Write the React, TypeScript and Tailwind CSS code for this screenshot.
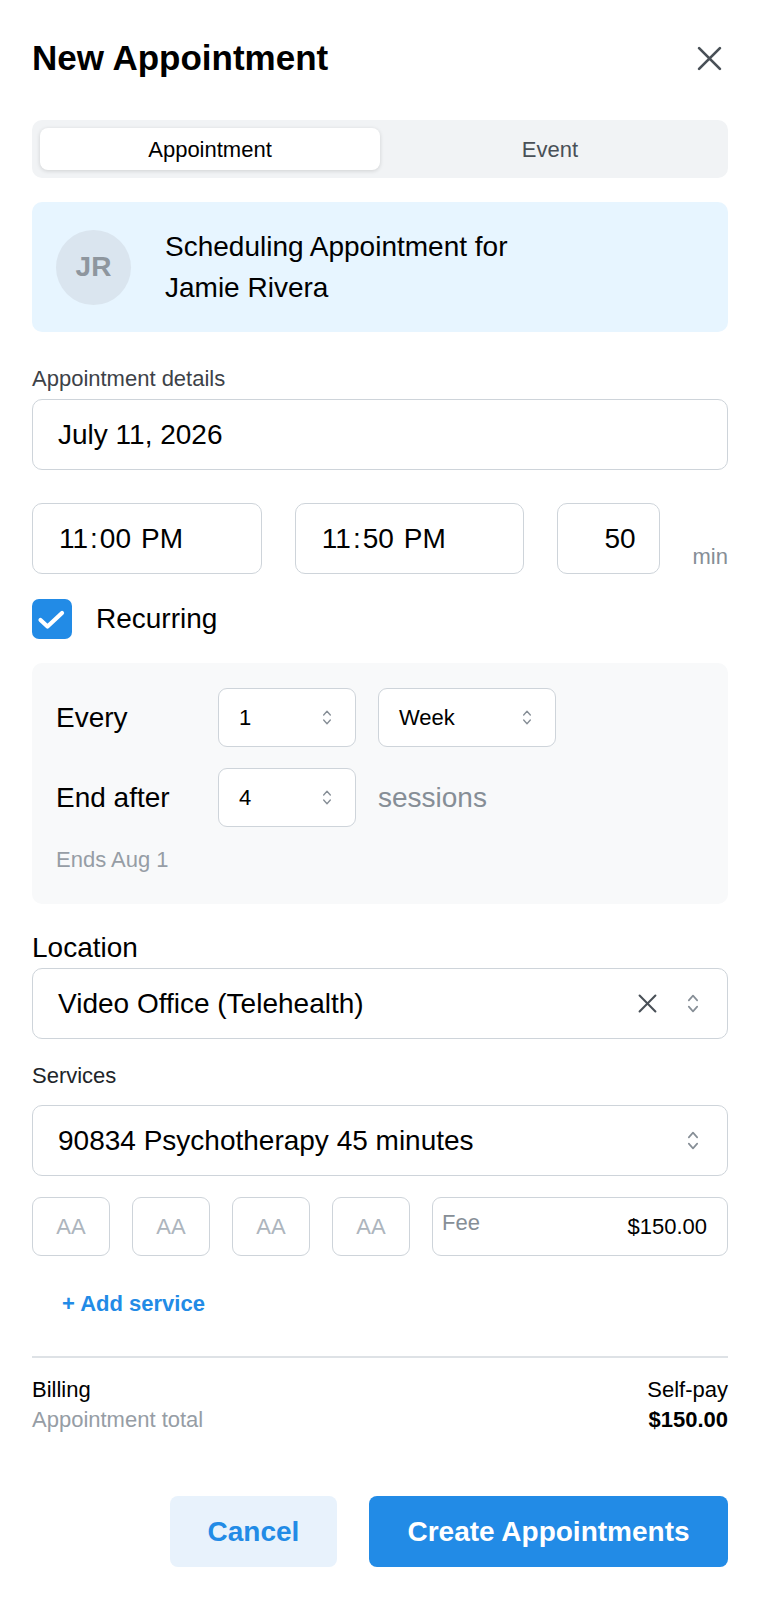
import React from 'react';

function UpDown({ className }: { className?: string }) {
  return (
    <svg viewBox="0 0 12 20" fill="none" stroke="currentColor" strokeWidth="1.6" strokeLinecap="round" strokeLinejoin="round" className={className}>
      <path d="M2 7l4-4.5 4 4.5" />
      <path d="M2 13l4 4.5 4-4.5" />
    </svg>
  );
}

function Cross({ className, width = 2.5 }: { className?: string; width?: number }) {
  return (
    <svg viewBox="0 0 24 24" fill="none" stroke="currentColor" strokeWidth={width} strokeLinecap="round" className={className}>
      <path d="M2 2l20 20M22 2L2 22" />
    </svg>
  );
}

function SmallSelect({ value, width }: { value: string; width: string }) {
  return (
    <div className={`${width} flex h-[59px] items-center justify-between rounded-[9px] border-[1.5px] border-[#ced4da] bg-white pl-[20px] pr-[23px]`}>
      <span className="text-[22px] leading-none">{value}</span>
      <UpDown className="h-[17px] w-[10px] text-[#868e96]" />
    </div>
  );
}

// native time field look: segments spaced a little wider than plain text
function TimeText({ h, m }: { h: string; m: string }) {
  return (
    <span>
      {h}
      <span className="mx-[2px]">:</span>
      {m}
      <span className="ml-[10px]">PM</span>
    </span>
  );
}

export default function App() {
  return (
    <div className="min-h-[1600px] bg-white px-8 pt-[38px] font-['Liberation_Sans',Arial,sans-serif] text-black">
      {/* header */}
      <div className="flex h-[40px] items-center justify-between">
        <h1 className="text-[35px] font-bold leading-[40px]">New Appointment</h1>
        <button className="mr-[6px] text-[#495057]">
          <Cross className="h-[25px] w-[25px]" width={2.6} />
        </button>
      </div>

      {/* segmented control */}
      <div className="mt-[42px] grid h-[58px] grid-cols-2 rounded-[10px] bg-[#f1f3f5] p-2">
        <div className="flex items-center justify-center rounded-[8px] bg-white text-[22px] shadow-[0_1px_4px_rgba(0,0,0,0.14)]">
          Appointment
        </div>
        <div className="flex items-center justify-center text-[22px] text-[#495057]">Event</div>
      </div>

      {/* client card */}
      <div className="mt-[24px] flex h-[130px] items-center gap-[34px] rounded-[10px] bg-[#e7f5ff] px-6">
        <div className="flex h-[75px] w-[75px] shrink-0 items-center justify-center rounded-full bg-[#dae5ef] text-[28px] font-bold text-[#8e969e]">
          JR
        </div>
        <div className="text-[28px] leading-[41px]">
          <div>Scheduling Appointment for</div>
          <div>Jamie Rivera</div>
        </div>
      </div>

      {/* date + time */}
      <div className="mt-[34px] text-[22px] leading-[26px] text-[#3d4248]">Appointment details</div>
      <div className="mt-[7px] flex h-[71px] items-center rounded-[10px] border-[1.5px] border-[#ced4da] pl-[25px] text-[28px]">
        July 11, 2026
      </div>

      <div className="mt-[33px] flex items-end gap-[33px]">
        <div className="flex h-[71px] w-[230px] items-center rounded-[10px] border-[1.5px] border-[#ced4da] pl-[26px] text-[28px]">
          <TimeText h="11" m="00" />
        </div>
        <div className="flex h-[71px] w-[229px] items-center rounded-[10px] border-[1.5px] border-[#ced4da] pl-[26px] text-[28px]">
          <TimeText h="11" m="50" />
        </div>
        <div className="flex h-[71px] w-[103px] items-center justify-end rounded-[10px] border-[1.5px] border-[#ced4da] pr-[23px] text-[28px]">
          50
        </div>
        <span className="pb-[4px] text-[22px] leading-[26px] text-[#868e96]">min</span>
      </div>

      {/* recurring */}
      <div className="mt-[25px] flex items-center gap-[24px]">
        <div className="flex h-[40px] w-[40px] items-center justify-center rounded-[7px] bg-[#228be6]">
          <svg viewBox="0 0 40 40" className="h-[40px] w-[40px]" fill="none" stroke="white" strokeWidth="4.2" strokeLinecap="round" strokeLinejoin="round">
            <path d="M8.5 21l7 6.5L30 14" />
          </svg>
        </div>
        <span className="text-[28px] leading-[34px]">Recurring</span>
      </div>

      <div className="mt-[24px] rounded-[10px] bg-[#f8f9fa] px-6 pb-[29px] pt-[25px]">
        <div className="flex items-center">
          <span className="w-[162px] text-[28px]">Every</span>
          <SmallSelect value="1" width="w-[138px]" />
          <div className="ml-[22px]">
            <SmallSelect value="Week" width="w-[178px]" />
          </div>
        </div>
        <div className="mt-[21px] flex items-center">
          <span className="w-[162px] text-[28px]">End after</span>
          <SmallSelect value="4" width="w-[138px]" />
          <span className="ml-[22px] text-[28px] text-[#868e96]">sessions</span>
        </div>
        <div className="mt-[18px] text-[22px] leading-[30px] text-[#969da5]">Ends Aug 1</div>
      </div>

      {/* location */}
      <div className="mt-[27px] text-[28px] leading-[34px]">Location</div>
      <div className="mt-[3px] flex h-[71px] items-center rounded-[10px] border-[1.5px] border-[#ced4da] pl-[25px] pr-[27px]">
        <span className="flex-1 text-[28px]">Video Office (Telehealth)</span>
        <Cross className="h-[19px] w-[19px] text-[#495057]" width={2.6} />
        <UpDown className="ml-[29px] h-[21px] w-[14px] text-[#868e96]" />
      </div>

      {/* services */}
      <div className="mt-[24px] text-[22px] leading-[26px] text-[#212529]">Services</div>
      <div className="mt-[16px] flex h-[71px] items-center rounded-[10px] border-[1.5px] border-[#ced4da] pl-[25px] pr-[27px]">
        <span className="flex-1 text-[28px]">90834 Psychotherapy 45 minutes</span>
        <UpDown className="h-[21px] w-[14px] text-[#868e96]" />
      </div>

      <div className="mt-[21px] flex h-[59px] gap-[22px]">
        {[0, 1, 2, 3].map((i) => (
          <div key={i} className="flex w-[78px] items-center justify-center rounded-[9px] border-[1.5px] border-[#ced4da] text-[22px] text-[#adb5bd]">
            AA
          </div>
        ))}
        <div className="flex flex-1 items-center justify-between rounded-[9px] border-[1.5px] border-[#ced4da] pl-[9px] pr-[20px] text-[22px]">
          <span className="mb-[8px] text-[#868e96]">Fee</span>
          <span>$150.00</span>
        </div>
      </div>

      <button className="mt-[35px] pl-[30px] text-[22px] font-bold leading-[26px] text-[#228be6]">+ Add service</button>

      <div className="mt-[38px] h-[2px] bg-[#dee2e6]" />

      {/* billing */}
      <div className="mt-[17px] text-[22px] leading-[30px]">
        <div className="flex justify-between">
          <span>Billing</span>
          <span>Self-pay</span>
        </div>
        <div className="flex justify-between">
          <span className="text-[#969da5]">Appointment total</span>
          <span className="font-bold">$150.00</span>
        </div>
      </div>

      {/* actions */}
      <div className="mt-[61px] flex justify-end gap-[32px]">
        <button className="h-[71px] w-[167px] rounded-[8px] bg-[#e8f2fc] text-[28px] font-bold text-[#228be6]">Cancel</button>
        <button className="h-[71px] w-[359px] rounded-[8px] bg-[#228be6] text-[28px] font-bold text-white">Create Appointments</button>
      </div>
    </div>
  );
}
